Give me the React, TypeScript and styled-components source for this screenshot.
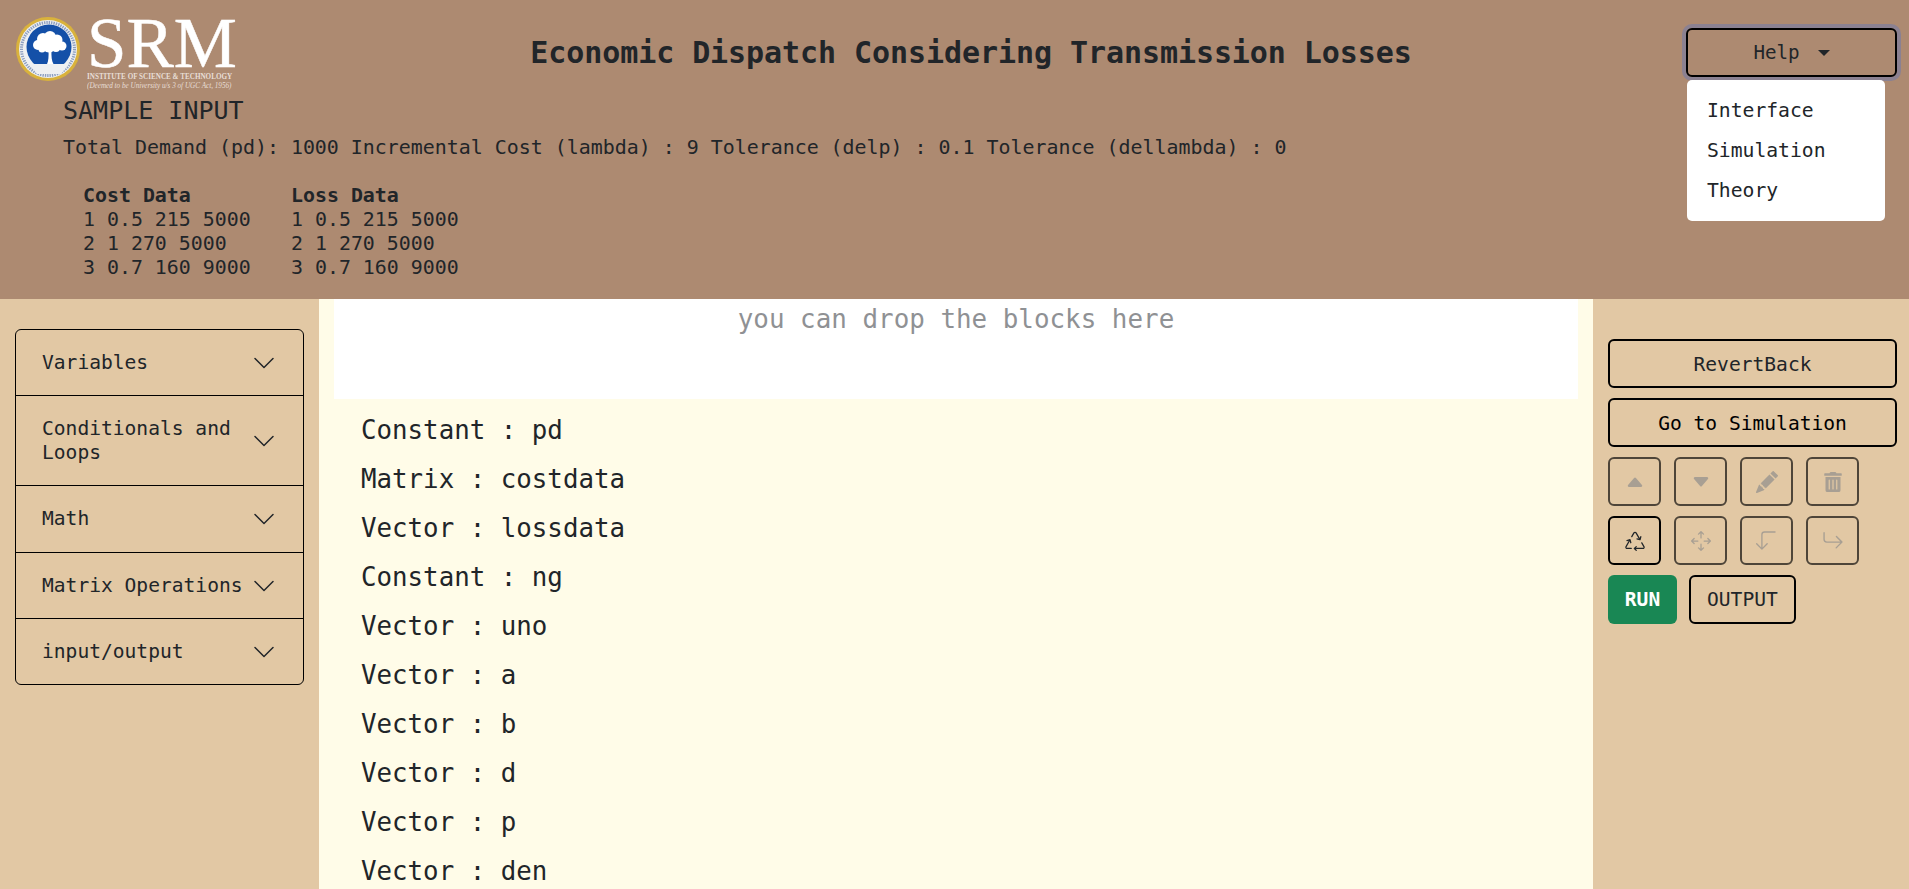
import { useState } from 'react';
import styled, { createGlobalStyle } from 'styled-components';
import {
  BsArrow90DegDown,
  BsArrowReturnRight,
  BsArrowsMove,
  BsCaretDownFill,
  BsCaretUpFill,
  BsChevronDown,
  BsPencilFill,
  BsRecycle,
} from 'react-icons/bs';
import { FaTrashAlt } from 'react-icons/fa';

const GlobalStyle = createGlobalStyle`
  html, body {
    margin: 0;
    height: 100%;
    overflow: hidden;
  }

  body {
    font-family: "DejaVu Sans Mono", "Liberation Mono", monospace;
    color: #212529;
  }

  * {
    box-sizing: border-box;
  }
`;

const Page = styled.div`
  display: flex;
  flex-direction: column;
  height: 100vh;
  overflow: hidden;
`;

const Header = styled.header`
  background: #ad8a71;
  height: 299px;
  flex-shrink: 0;
`;

const TopRow = styled.div`
  display: grid;
  grid-template-columns: 220px 1fr 211px;
  height: 96px;
  padding: 17px 12px 0 16px;
`;

const Logo = styled.div`
  display: flex;
  gap: 7px;
`;

const WordMark = styled.div`
  display: flex;
  flex-direction: column;
  width: 148px;
  color: #fff;
  font-family: "Liberation Serif", serif;
  white-space: nowrap;
`;

const WordMarkBig = styled.div`
  font-size: 71px;
  line-height: 52px;
  height: 54px;
  -webkit-text-stroke: 0.5px #fff;
`;

const WordMarkLine = styled.div`
  font-size: 9.1px;
  font-weight: 700;
  line-height: 10px;
  color: #e8ded6;
  transform: scaleX(0.785);
  transform-origin: left center;
`;

const WordMarkNote = styled.div`
  font-size: 7.7px;
  font-style: italic;
  line-height: 9px;
  color: #e8ded6;
  transform: scaleX(0.93);
  transform-origin: left center;
`;

const Title = styled.h1`
  margin: 0;
  padding: 18px 0 0 20px;
  font-size: 30px;
  line-height: 36px;
  font-weight: 700;
  letter-spacing: -0.07px;
  text-align: center;
`;

const HelpWrap = styled.div`
  position: relative;
  height: 49px;
  margin-top: 11px;
`;

const HelpButton = styled.button`
  display: flex;
  align-items: center;
  justify-content: center;
  gap: 18px;
  width: 100%;
  height: 49px;
  background: transparent;
  border: 2px solid #000;
  border-radius: 6px;
  box-shadow: 0 0 0 4px #8b8191;
  color: #212529;
  font: inherit;
  font-size: 19.2px;
`;

const Caret = styled.span`
  width: 0;
  height: 0;
  border-left: 6px solid transparent;
  border-right: 6px solid transparent;
  border-top: 6px solid #212529;
`;

const HelpMenu = styled.ul`
  position: absolute;
  top: 52px;
  left: 1px;
  width: 198px;
  height: 141px;
  margin: 0;
  padding: 11px 0;
  list-style: none;
  background: #fff;
  border-radius: 5px;
  z-index: 2;
`;

const HelpItem = styled.li`
  height: 40px;
  padding: 0 20px;
  font-size: 19.7px;
  line-height: 40px;
`;

const Sample = styled.section`
  padding-left: 63px;
`;

const SampleTitle = styled.h4`
  margin: 0;
  font-size: 25px;
  line-height: 30px;
  font-weight: 400;
`;

const SampleLine = styled.p`
  margin: 10px 0 24px;
  font-size: 19.93px;
  line-height: 24px;
  white-space: nowrap;
`;

const DataRow = styled.div`
  display: flex;
  padding-left: 20px;
`;

const DataColumn = styled.div`
  width: 208px;
  font-size: 19.9px;
  line-height: 24px;
`;

const DataHead = styled.div`
  font-weight: 700;
`;

const Main = styled.main`
  display: flex;
  flex: 1;
  min-height: 0;
`;

const Sidebar = styled.aside`
  width: 319px;
  flex-shrink: 0;
  padding: 30px 15px 0;
  background: #e2c8a4;
`;

const Accordion = styled.div`
  border: 1px solid #000;
  border-radius: 6px;
  overflow: hidden;
`;

const AccordionItem = styled.button`
  display: flex;
  align-items: center;
  justify-content: space-between;
  gap: 8px;
  width: 100%;
  padding: 21.1px 27px 20.1px 26px;
  background: transparent;
  border: 0;
  border-top: 1px solid #000;
  color: #212529;
  font: inherit;
  font-size: 19.6px;
  line-height: 24px;
  text-align: left;

  &:first-child {
    border-top: 0;
  }

  svg {
    flex-shrink: 0;
  }
`;

const Workspace = styled.div`
  flex: 1;
  min-width: 0;
  padding: 0 15px;
  background: #fffce8;
`;

const DropArea = styled.div`
  height: 100px;
  padding-top: 5px;
  background: #fff;
  color: #8f9194;
  font-size: 25.9px;
  line-height: 30px;
  text-align: center;
`;

const BlockList = styled.div`
  padding: 7px 0 0 27px;
`;

const BlockRow = styled.div`
  height: 49px;
  font-size: 25.8px;
  line-height: 49px;
`;

const Tools = styled.aside`
  width: 316px;
  flex-shrink: 0;
  display: flex;
  flex-direction: column;
  gap: 10px;
  padding: 40px 12px 0 15px;
  background: #e2c8a4;
`;

const OutlineButton = styled.button`
  display: block;
  height: 49px;
  padding: 0 16px;
  background: transparent;
  border: 2px solid #000;
  border-radius: 6px;
  color: ${p => (p.color ? p.color : '#212529')};
  font: inherit;
  font-size: 19.6px;
`;

const WideButton = styled(OutlineButton)`
  width: 100%;
  padding-top: 2px;
`;

const IconRow = styled.div`
  display: flex;
  gap: 13px;
`;

const IconButton = styled.button<{ $off?: boolean }>`
  display: flex;
  align-items: center;
  justify-content: center;
  width: 53px;
  height: 49px;
  padding: 0;
  background: transparent;
  border: 2px solid #000;
  border-radius: 6px;
  color: #212529;
  opacity: ${p => (p.$off ? 0.65 : 1)};

  svg {
    color: ${p => (p.$off ? '#8a8a8a' : '#212529')};
  }
`;

const RunRow = styled.div`
  display: flex;
  gap: 12px;
`;

const RunButton = styled.button`
  width: 69px;
  height: 49px;
  padding: 0;
  background: #198754;
  border: 0;
  border-radius: 6px;
  color: #fff;
  font: inherit;
  font-size: 19.6px;
  font-weight: 700;
`;

const SrmSeal = () => (
  <svg width="64" height="64" viewBox="0 0 64 64" aria-hidden="true">
    <circle cx="32" cy="32" r="32" fill="#d9b23c" />
    <circle cx="32" cy="32" r="29" fill="#eef0f2" />
    <circle cx="32" cy="32" r="26.5" fill="none" stroke="#8d9fc0" strokeWidth="3" strokeDasharray="1.4 1" />
    <circle cx="33" cy="30" r="22.5" fill="#1450a8" />
    <path d="M13 47h40l-8 10H21z" fill="#eef0f2" />
    <path d="M31 47c1.500-3 1.800-8 1.500-14h3c-.3 6 .2 11 2 14z" fill="#fff" />
    <g fill="#fff">
      <circle cx="22" cy="28" r="5" />
      <circle cx="27" cy="22" r="6" />
      <circle cx="34" cy="20" r="6" />
      <circle cx="41" cy="23" r="5.500" />
      <circle cx="46" cy="29" r="4.500" />
      <circle cx="33" cy="28" r="7.500" />
      <circle cx="40" cy="31" r="4" />
      <circle cx="26" cy="32" r="3.500" />
    </g>
  </svg>
);

const categories = ['Variables', 'Conditionals and Loops', 'Math', 'Matrix Operations', 'input/output'];
const blocks = [
  'Constant : pd',
  'Matrix : costdata',
  'Vector : lossdata',
  'Constant : ng',
  'Vector : uno',
  'Vector : a',
  'Vector : b',
  'Vector : d',
  'Vector : p',
  'Vector : den',
];
const sampleRows = ['1 0.5 215 5000', '2 1 270 5000', '3 0.7 160 9000'];

const App = () => {
  const [menuOpen, setMenuOpen] = useState(true);

  return (
    <Page>
      <GlobalStyle />
      <Header>
        <TopRow>
          <Logo>
            <SrmSeal />
            <WordMark>
              <WordMarkBig>SRM</WordMarkBig>
              <WordMarkLine>INSTITUTE OF SCIENCE &amp; TECHNOLOGY</WordMarkLine>
              <WordMarkNote>(Deemed to be University u/s 3 of UGC Act, 1956)</WordMarkNote>
            </WordMark>
          </Logo>
          <Title>Economic Dispatch Considering Transmission Losses</Title>
          <HelpWrap>
            <HelpButton onClick={() => setMenuOpen(prev => !prev)}>
              Help <Caret />
            </HelpButton>
            {menuOpen && (
              <HelpMenu>
                <HelpItem>Interface</HelpItem>
                <HelpItem>Simulation</HelpItem>
                <HelpItem>Theory</HelpItem>
              </HelpMenu>
            )}
          </HelpWrap>
        </TopRow>
        <Sample>
          <SampleTitle>SAMPLE INPUT</SampleTitle>
          <SampleLine>
            Total Demand (pd): 1000 Incremental Cost (lambda) : 9 Tolerance (delp) : 0.1 Tolerance (dellambda) : 0
          </SampleLine>
          <DataRow>
            <DataColumn>
              <DataHead>Cost Data</DataHead>
              {sampleRows.map(row => (
                <div key={row}>{row}</div>
              ))}
            </DataColumn>
            <DataColumn>
              <DataHead>Loss Data</DataHead>
              {sampleRows.map(row => (
                <div key={row}>{row}</div>
              ))}
            </DataColumn>
          </DataRow>
        </Sample>
      </Header>
      <Main>
        <Sidebar>
          <Accordion>
            {categories.map(name => (
              <AccordionItem key={name}>
                <span>{name}</span>
                <BsChevronDown size={24} />
              </AccordionItem>
            ))}
          </Accordion>
        </Sidebar>
        <Workspace>
          <DropArea>you can drop the blocks here</DropArea>
          <BlockList>
            {blocks.map(block => (
              <BlockRow key={block}>{block}</BlockRow>
            ))}
          </BlockList>
        </Workspace>
        <Tools>
          <WideButton>RevertBack</WideButton>
          <WideButton color="#000">Go to Simulation</WideButton>
          <IconRow>
            <IconButton $off><BsCaretUpFill size={20} /></IconButton>
            <IconButton $off><BsCaretDownFill size={20} /></IconButton>
            <IconButton $off><BsPencilFill size={22} /></IconButton>
            <IconButton $off><FaTrashAlt size={20} /></IconButton>
          </IconRow>
          <IconRow>
            <IconButton><BsRecycle size={20} /></IconButton>
            <IconButton $off><BsArrowsMove size={20} /></IconButton>
            <IconButton $off><BsArrow90DegDown size={21} /></IconButton>
            <IconButton $off><BsArrowReturnRight size={22} /></IconButton>
          </IconRow>
          <RunRow>
            <RunButton>RUN</RunButton>
            <OutlineButton>OUTPUT</OutlineButton>
          </RunRow>
        </Tools>
      </Main>
    </Page>
  );
};

export default App;
